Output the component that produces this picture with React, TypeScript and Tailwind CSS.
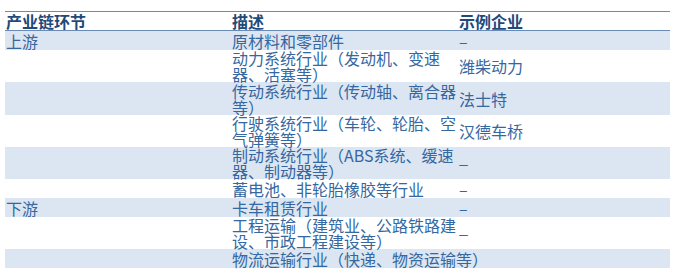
import React from "react";

type Row = { a: string; b: string[]; c: string; h: string; blue: boolean; low?: boolean };

const rows: Row[] = [
  { a: "上游", b: ["原材料和零部件"], c: "–", h: "h-[19px]", blue: true },
  { a: "", b: ["动力系统行业（发动机、变速", "器、活塞等）"], c: "潍柴动力", h: "h-[32px]", blue: false },
  { a: "", b: ["传动系统行业（传动轴、离合器", "等）"], c: "法士特", h: "h-[33px]", blue: true },
  { a: "", b: ["行驶系统行业（车轮、轮胎、空", "气弹簧等）"], c: "汉德车桥", h: "h-[32px]", blue: false },
  { a: "", b: ["制动系统行业（ABS系统、缓速", "器、制动器等）"], c: "_", h: "h-[32px]", blue: true, low: true },
  { a: "", b: ["蓄电池、非轮胎橡胶等行业"], c: "–", h: "h-[19px]", blue: false },
  { a: "下游", b: ["卡车租赁行业"], c: "–", h: "h-[19px]", blue: true },
  { a: "", b: ["工程运输（建筑业、公路铁路建", "设、市政工程建设等）"], c: "_", h: "h-[32px]", blue: false, low: true },
  { a: "", b: ["物流运输行业（快递、物资运输等）"], c: "", h: "h-[19px]", blue: true },
];

export default function App() {
  return (
    <div
      className="w-[674px] h-[275px] bg-white pt-[11px] pl-[5px] text-[16px] leading-[16px] text-[#3567a0]"
      style={{ fontFamily: '"Noto Sans CJK SC", "Noto Sans", sans-serif' }}
    >
      <div className="w-[665px]">
        <div className="grid grid-cols-[227px_227px_211px] h-[20px] border-t border-b border-[#6a8bb5] font-bold text-[#1f4a7a]">
          <div className="pl-[1px] flex items-center">产业链环节</div>
          <div className="flex items-center">描述</div>
          <div className="flex items-center">示例企业</div>
        </div>
        {rows.map((r, i) => (
          <div
            key={i}
            className={`grid grid-cols-[227px_227px_211px] ${r.h} ${r.blue ? "bg-[#dce6f2]" : "bg-white"}`}
          >
            <div className="pl-[1px] flex items-center">{r.a}</div>
            <div className="flex flex-col justify-center whitespace-nowrap">
              {r.b.map((line, j) => (
                <span key={j}>{line}</span>
              ))}
            </div>
            <div className="flex items-center">
              <span className={r.low ? "-translate-y-[6px]" : ""}>{r.c}</span>
            </div>
          </div>
        ))}
      </div>
    </div>
  );
}
